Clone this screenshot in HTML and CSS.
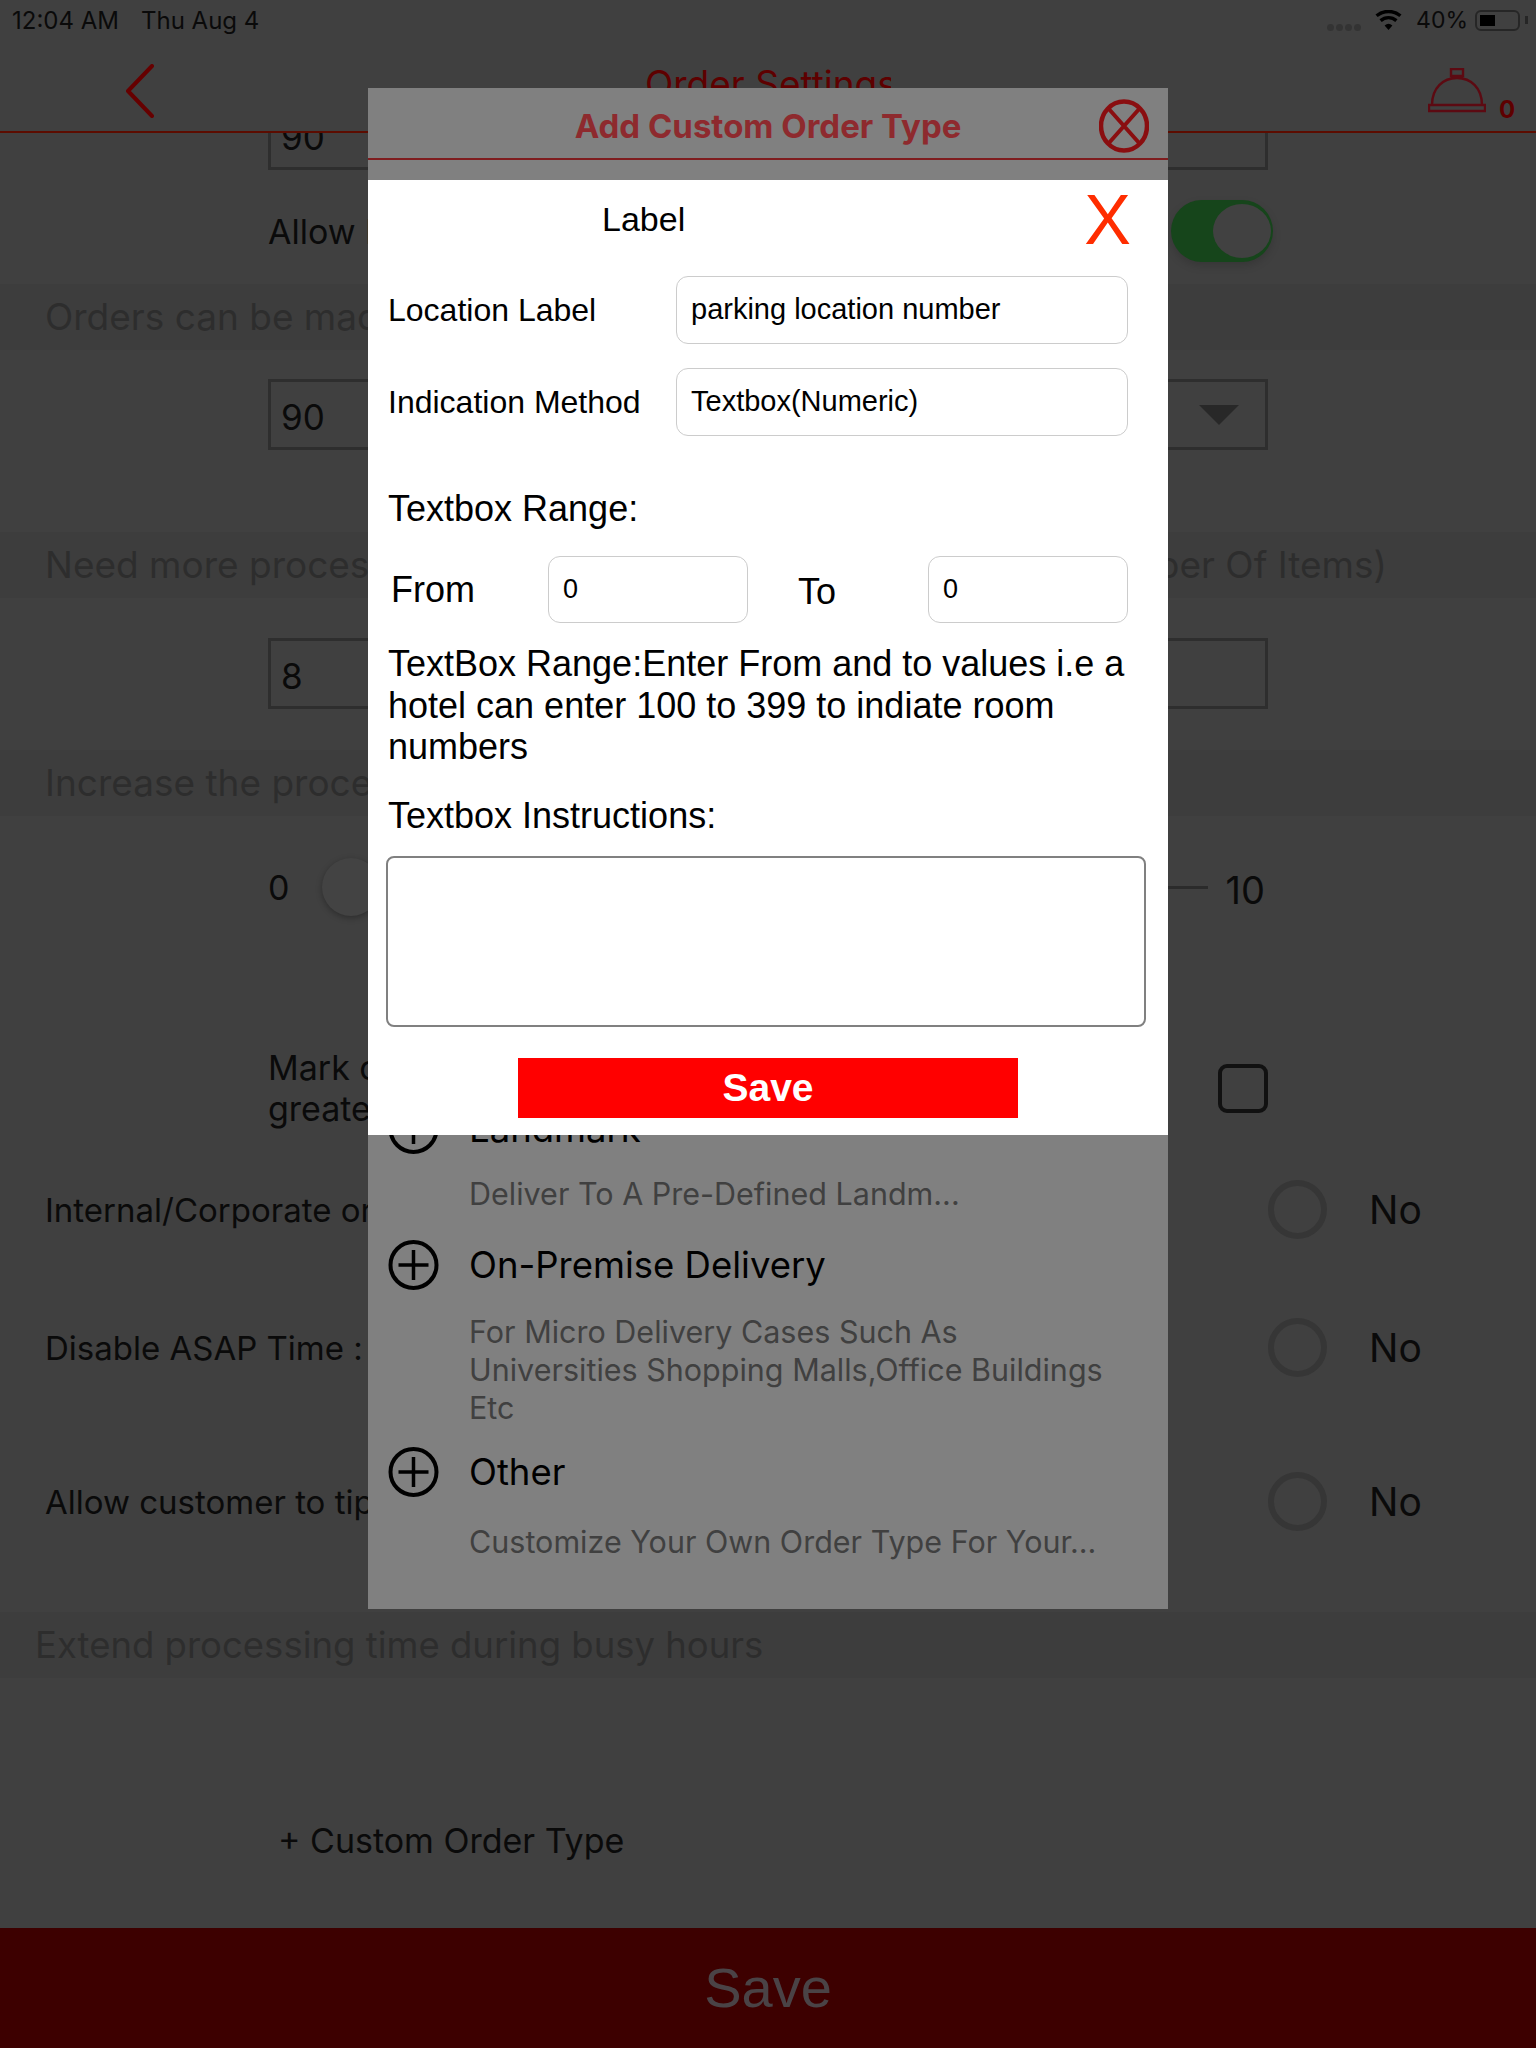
FILE: index.html

```html
<!DOCTYPE html>
<html lang="en">

<head>
    <meta charset="UTF-8">
    <meta name="viewport" content="width=device-width, initial-scale=1.0">
    <title>Order Settings</title>
    <link rel="stylesheet" href="styles.css">
</head>

<body>
    <div class="page">
        <div class="status">
            <span class="time">12:04 AM</span>
            <span class="date">Thu Aug 4</span>
            <span class="signal"><i></i><i></i><i></i><i></i></span>
            <svg class="wifi" viewBox="0 0 27 20">
                <path d="M13.5 20 9.6 15.4a6 6 0 0 1 7.8 0z" fill="#000" />
                <path d="M5.6 10.6a12 12 0 0 1 15.8 0M1.6 5.8a18.4 18.4 0 0 1 23.8 0" fill="none" stroke="#000" stroke-width="3.4" />
            </svg>
            <span class="percent">40%</span>
            <span class="battery"><i></i></span>
            <span class="battery-tip"></span>
        </div>

        <div class="topbar">
            <svg class="back" viewBox="0 0 30 54">
                <path d="M27 2 3 27l24 25" fill="none" stroke="#660000" stroke-width="4" stroke-linecap="round" stroke-linejoin="round" />
            </svg>
            <h1 class="title">Order Settings</h1>
            <svg class="bell" viewBox="0 0 58 46">
                <path d="M23 1h12v7H23zM26 8v3M32 8v3M4 37C4 20 15 10 29 10s25 10 25 27M1 37h56v6H1z" fill="none" stroke="#5c0a12" stroke-width="2.4" />
            </svg>
            <span class="bell-count">0</span>
        </div>

        <div class="content">
            <div class="box first">90</div>
            <div class="switch-row">
                <span class="clip short">Allow Pre-Orders</span>
                <span class="switch"><i></i></span>
            </div>

            <div class="band"><span class="clip">Orders can be made</span></div>
            <div class="box select">90<span class="arrow"></span></div>

            <div class="band need">
                <span class="clip">Need more processing time</span>
                <span class="clip-end"><span>Number Of Items)</span></span>
            </div>
            <div class="box">8</div>

            <div class="band increase"><span class="clip">Increase the processing time</span></div>
            <div class="slider">
                <span class="slider-min">0</span>
                <span class="thumb"></span>
                <span class="track"></span>
                <span class="slider-max">10</span>
            </div>

            <div class="mark">
                <p class="clip short">Mark orders as large when<br>greater than</p>
                <span class="check"></span>
            </div>

            <div class="yes-no internal">
                <span class="clip yes-no-label">Internal/Corporate orders</span>
                <span class="radio"></span>
                <span class="no">No</span>
            </div>
            <div class="yes-no disable">
                <span class="clip yes-no-label">Disable ASAP Time :</span>
                <span class="radio"></span>
                <span class="no">No</span>
            </div>
            <div class="yes-no tip">
                <span class="clip yes-no-label">Allow customer to tip</span>
                <span class="radio"></span>
                <span class="no">No</span>
            </div>

            <div class="band extend">Extend processing time during busy hours</div>
            <div class="custom">+ Custom Order Type</div>
        </div>

        <div class="footer">Save</div>

        <div class="modal">
            <div class="modal-head">
                <h2>Add Custom Order Type</h2>
                <svg class="modal-close" viewBox="0 0 50 54">
                    <ellipse cx="25" cy="27" rx="23" ry="24.500" fill="none" stroke="#8a0e10" stroke-width="4.500" />
                    <path d="M9 9 41 45M41 9 9 45" stroke="#8a0e10" stroke-width="4" />
                </svg>
            </div>

            <div class="sheet">
                <div class="sheet-top">
                    <span class="sheet-title">Label</span>
                    <span class="sheet-x">X</span>
                </div>
                <div class="form-row location">
                    <label>Location Label</label>
                    <div class="field">parking location number</div>
                </div>
                <div class="form-row method">
                    <label>Indication Method</label>
                    <div class="field">Textbox(Numeric)</div>
                </div>
                <p class="range-title">Textbox Range:</p>
                <div class="range">
                    <label class="from">From</label>
                    <div class="field small">0</div>
                    <label class="to">To</label>
                    <div class="field small">0</div>
                </div>
                <p class="help">TextBox Range:Enter From and to values i.e a hotel can enter 100 to 399 to indiate room numbers</p>
                <p class="instructions">Textbox Instructions:</p>
                <div class="textarea"></div>
                <button class="save">Save</button>
            </div>

            <div class="types">
                <div class="type landmark">
                    <svg class="plus" viewBox="0 0 50 50">
                        <circle cx="25" cy="25" r="23" fill="none" stroke="#000" stroke-width="4" />
                        <path d="M25 10v30M10 25h30" stroke="#000" stroke-width="3.500" />
                    </svg>
                    <div class="type-body">
                        <h3>Landmark</h3>
                        <p>Deliver To A Pre-Defined Landm...</p>
                    </div>
                </div>
                <div class="type">
                    <svg class="plus" viewBox="0 0 50 50">
                        <circle cx="25" cy="25" r="23" fill="none" stroke="#000" stroke-width="4" />
                        <path d="M25 10v30M10 25h30" stroke="#000" stroke-width="3.500" />
                    </svg>
                    <div class="type-body">
                        <h3>On-Premise Delivery</h3>
                        <p>For Micro Delivery Cases Such As<br>Universities Shopping Malls,Office Buildings<br>Etc</p>
                    </div>
                </div>
                <div class="type other">
                    <svg class="plus" viewBox="0 0 50 50">
                        <circle cx="25" cy="25" r="23" fill="none" stroke="#000" stroke-width="4" />
                        <path d="M25 10v30M10 25h30" stroke="#000" stroke-width="3.500" />
                    </svg>
                    <div class="type-body">
                        <h3>Other</h3>
                        <p>Customize Your Own Order Type For Your...</p>
                    </div>
                </div>
            </div>
        </div>
    </div>
</body>

</html>
```

FILE: styles.css

```css
* {
    margin: 0;
    padding: 0;
    box-sizing: border-box;
}

body {
    font-family: Inter, "Liberation Sans", sans-serif;
    background-color: #404040;
}

i {
    display: block;
}

.page {
    width: 1536px;
    height: 2048px;
    position: relative;
    overflow: hidden;
    display: flex;
    flex-direction: column;
    background-color: #404040;
    color: #0a0a0a;
}

/* text that runs in under the dialog stops at its edge */
.clip {
    display: block;
    width: 323px;
    overflow: hidden;
    white-space: nowrap;
}

.clip.short {
    width: 100px;
}

.clip-end {
    width: 219px;
    margin-right: 149px;
    display: flex;
    justify-content: flex-end;
    overflow: hidden;
    white-space: nowrap;
}

/* status bar */
.status {
    height: 40px;
    padding-left: 12px;
    display: flex;
    align-items: center;
    font-size: 24px;
    background-color: #404040;
    position: relative;
    z-index: 2;
}

.date {
    margin-left: 22px;
}

.signal {
    margin-left: auto;
    display: flex;
    gap: 2px;
    margin-top: 14px;
}

.signal i {
    width: 7px;
    height: 7px;
    border-radius: 50%;
    background-color: #333;
}

.wifi {
    width: 27px;
    height: 20px;
    margin-left: 14px;
}

.percent {
    margin-left: 14px;
    font-size: 23px;
}

.battery {
    width: 45px;
    height: 21px;
    margin-left: 7px;
    padding: 3px;
    border: 2px solid #262626;
    border-radius: 6px;
}

.battery i {
    width: 15px;
    height: 100%;
    background-color: #000;
}

.battery-tip {
    width: 3px;
    height: 8px;
    margin: 0 8px 0 5px;
    background-color: #262626;
}

/* top bar */
.topbar {
    height: 93px;
    border-bottom: 2px solid #5c0c00;
    display: flex;
    align-items: flex-start;
    background-color: #404040;
    position: relative;
    z-index: 2;
}

.back {
    width: 30px;
    height: 54px;
    margin: 24px 0 0 125px;
}

.title {
    width: 246px;
    height: 26px;
    margin: 22px 0 0 490px;
    overflow: hidden;
    font-size: 37px;
    font-weight: 400;
    line-height: 44px;
    white-space: nowrap;
    color: #5e0000;
}

.bell {
    width: 58px;
    height: 46px;
    margin: 28px 0 0 537px;
}

.bell-count {
    margin: 55px 0 0 13px;
    font-size: 24px;
    font-weight: 700;
    color: #5e0000;
}

/* page behind the dialog */
.content {
    flex: 1;
    display: flex;
    flex-direction: column;
}

.box {
    width: 1000px;
    height: 71px;
    margin-left: 268px;
    padding-left: 10px;
    border: 3px solid #2e2e2e;
    font-size: 35px;
    line-height: 70px;
    display: flex;
    justify-content: space-between;
    flex-shrink: 0;
}

.first {
    margin-top: -34px;
}

.switch-row {
    height: 62px;
    margin: 30px 0 22px 268px;
    width: 1005px;
    display: flex;
    align-items: center;
    justify-content: space-between;
    font-size: 34px;
}

.switch {
    width: 102px;
    height: 62px;
    padding: 4px 2px;
    border-radius: 31px;
    background-color: #16451b;
    display: flex;
    justify-content: flex-end;
    box-shadow: 0 4px 8px rgba(0, 0, 0, .15);
}

.switch i {
    width: 58px;
    height: 54px;
    border-radius: 50%;
    background-color: #414141;
}

.band {
    height: 66px;
    padding-left: 45px;
    font-size: 37px;
    line-height: 66px;
    white-space: nowrap;
    color: #2d2d2d;
    background-color: #3d3d3d;
    flex-shrink: 0;
}

.select {
    margin-top: 29px;
}

.arrow {
    width: 0;
    height: 0;
    margin: 23px 26px 0 0;
    border-left: 20px solid transparent;
    border-right: 20px solid transparent;
    border-top: 20px solid #282828;
}

.need {
    margin-top: 82px;
    display: flex;
    justify-content: space-between;
}

.need + .box {
    margin-top: 40px;
}

.increase {
    margin-top: 41px;
}

.slider {
    width: 1000px;
    height: 60px;
    margin: 41px 0 0 268px;
    display: flex;
    align-items: center;
    font-size: 34px;
}

.thumb {
    width: 58px;
    height: 58px;
    margin-left: 33px;
    border-radius: 50%;
    background-color: #434343;
    box-shadow: 0 2px 6px rgba(0, 0, 0, .3);
}

.track {
    flex: 1;
    height: 3px;
    background-color: #2b2b2b;
}

.slider-max {
    margin: 6px 3px 0 18px;
    font-size: 38px;
}

.mark {
    width: 1000px;
    margin: 130px 0 0 268px;
    display: flex;
    justify-content: space-between;
    align-items: center;
    font-size: 34px;
    line-height: 41px;
}

.check {
    width: 50px;
    height: 49px;
    border: 4px solid #111;
    border-radius: 9px;
}

.yes-no {
    height: 60px;
    padding-left: 45px;
    display: flex;
    align-items: center;
    font-size: 33px;
    flex-shrink: 0;
}

.yes-no-label {
    margin-right: 900px;
    padding-top: 2px;
}

.radio {
    width: 59px;
    height: 59px;
    border: 6px solid #363636;
    border-radius: 50%;
}

.no {
    margin-left: 42px;
    font-size: 39px;
}

.internal {
    margin-top: 50px;
}

.disable {
    margin-top: 78px;
}

.tip {
    margin-top: 94px;
}

.extend {
    margin-top: 81px;
    padding-left: 35px;
    font-size: 36.500px;
}

.custom {
    margin: 142px 0 0 278px;
    font-size: 34px;
}

.footer {
    height: 120px;
    font-family: "Liberation Sans", sans-serif;
    font-size: 56px;
    line-height: 120px;
    text-align: center;
    color: #4a4346;
    background-color: #3d0000;
    flex-shrink: 0;
}

/* dialog */
.modal {
    width: 800px;
    height: 1521px;
    position: absolute;
    left: 368px;
    top: 88px;
    z-index: 3;
    display: flex;
    flex-direction: column;
    background-color: #808080;
}

.modal-head {
    height: 92px;
    position: relative;
    display: flex;
    justify-content: center;
    flex-shrink: 0;
}

.modal-head::after {
    content: "";
    position: absolute;
    left: 0;
    right: 0;
    top: 70px;
    height: 2px;
    background-color: #7f1d1f;
}

.modal-head h2 {
    margin-top: 18px;
    font-size: 33px;
    font-weight: 700;
    color: #8e2a2e;
}

.modal-close {
    width: 50px;
    height: 54px;
    position: absolute;
    left: 731px;
    top: 11px;
}

.sheet {
    height: 955px;
    padding: 0 20px;
    font-family: "Liberation Sans", sans-serif;
    font-size: 32px;
    color: #000;
    background-color: #fff;
    display: flex;
    flex-direction: column;
    position: relative;
    z-index: 1;
    flex-shrink: 0;
}

.sheet-top {
    height: 96px;
    padding-bottom: 17px;
    display: flex;
    align-items: center;
    flex-shrink: 0;
}

.sheet-title {
    margin-left: 214px;
    font-size: 34px;
}

.sheet-x {
    margin-left: 399px;
    font-size: 70px;
    line-height: 1;
    color: #ff2d00;
}

.form-row {
    display: flex;
    align-items: center;
}

.form-row label {
    width: 288px;
}

.method {
    margin-top: 24px;
}

.field {
    width: 452px;
    height: 68px;
    padding-left: 14px;
    border: 1px solid #ccc;
    border-radius: 12px;
    font-size: 29px;
    line-height: 64px;
}

.range-title {
    margin-top: 54px;
    font-size: 36px;
    line-height: 37px;
}

.range {
    margin-top: 29px;
    display: flex;
    align-items: center;
    font-size: 36px;
}

.from {
    width: 160px;
    padding-left: 3px;
}

.field.small {
    width: 200px;
    height: 67px;
    font-size: 27px;
}

.to {
    width: 180px;
    padding: 4px 0 0 50px;
}

.help {
    margin-top: 20px;
    font-size: 36px;
    line-height: 41.500px;
}

.instructions {
    margin-top: 29px;
    font-size: 36px;
    line-height: 37px;
}

.textarea {
    width: 760px;
    height: 171px;
    margin: 22px 0 0 -2px;
    border: 2px solid #808080;
    border-radius: 8px;
    flex-shrink: 0;
}

.save {
    width: 500px;
    height: 60px;
    margin: 31px 0 0 130px;
    border: 0;
    font-family: "Liberation Sans", sans-serif;
    font-size: 39px;
    font-weight: 700;
    color: #fff;
    background-color: #f00;
    flex-shrink: 0;
}

.types {
    flex: 1;
    padding-left: 20px;
    overflow: hidden;
}

.type {
    display: flex;
    gap: 30px;
}

.plus {
    width: 51px;
    height: 50px;
    flex-shrink: 0;
}

.type-body {
    flex: 1;
}

.type h3 {
    font-size: 36.500px;
    font-weight: 400;
    line-height: 50px;
    color: #000;
}

.type p {
    margin: 23px 0 20px;
    font-size: 30.500px;
    line-height: 38px;
    color: #404040;
    white-space: nowrap;
}

.landmark {
    margin-top: -31px;
}

.landmark p {
    margin: 21px 0 27px;
}

.other p {
    margin-top: 26px;
}
```
